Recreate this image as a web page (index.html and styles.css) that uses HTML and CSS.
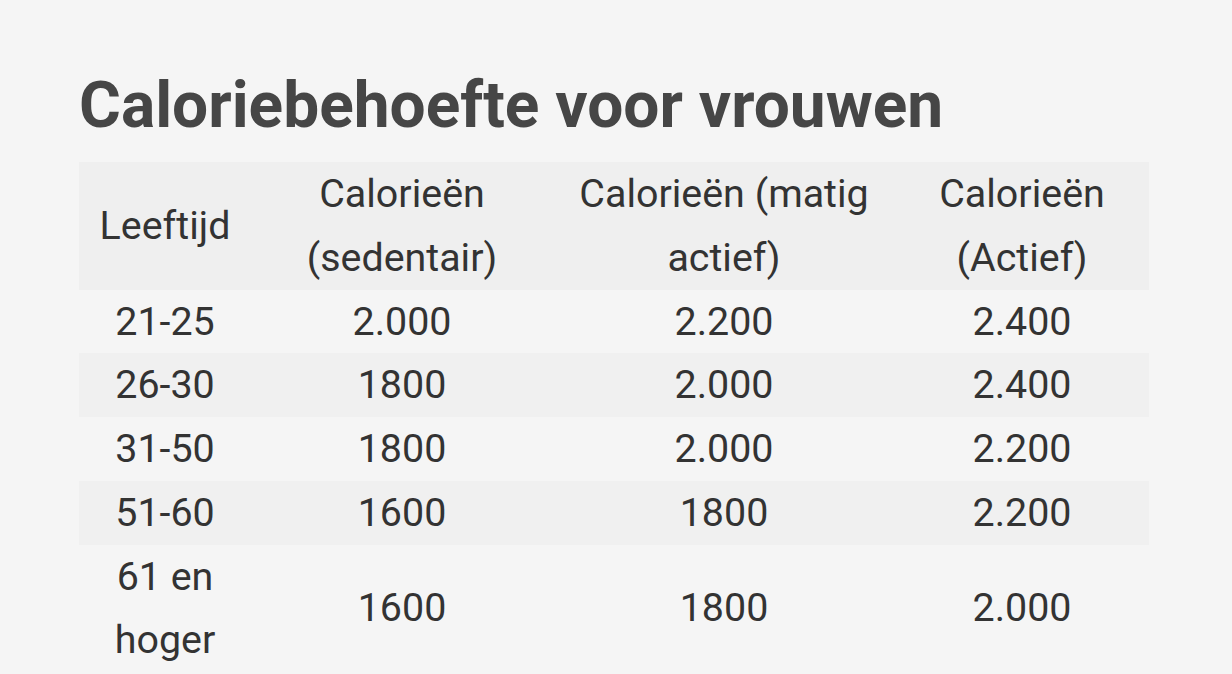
FILE: index.html
```html
<!DOCTYPE html>
<html lang="nl">
<head>
<meta charset="utf-8">
<title>Caloriebehoefte voor vrouwen</title>
<link rel="stylesheet" href="styles.css">
</head>
<body>
<main class="page">
  <h1 class="title">Caloriebehoefte voor vrouwen</h1>
  <table class="cal-table">
    <colgroup>
      <col class="c1"><col class="c2"><col class="c3"><col class="c4">
    </colgroup>
    <thead>
      <tr>
        <th>Leeftijd</th>
        <th>Calorieën (sedentair)</th>
        <th>Calorieën (matig actief)</th>
        <th>Calorieën (Actief)</th>
      </tr>
    </thead>
    <tbody>
      <tr><td>21-25</td><td>2.000</td><td>2.200</td><td>2.400</td></tr>
      <tr class="alt"><td>26-30</td><td>1800</td><td>2.000</td><td>2.400</td></tr>
      <tr><td>31-50</td><td>1800</td><td>2.000</td><td>2.200</td></tr>
      <tr class="alt"><td>51-60</td><td>1600</td><td>1800</td><td>2.200</td></tr>
      <tr><td class="narrow">61 en hoger</td><td>1600</td><td>1800</td><td>2.000</td></tr>
    </tbody>
  </table>
</main>
</body>
</html>
```

FILE: styles.css
```css
html, body {
  margin: 0;
  padding: 0;
  background: #f5f5f5;
}
body {
  font-family: Roboto, "Liberation Sans", sans-serif;
  color: #333333;
}
.page {
  padding: 62px 83px 0 79px;
}
.title {
  margin: 0 0 12px 0;
  font-size: 64px;
  line-height: 88px;
  font-weight: 700;
  color: #464646;
}
.cal-table {
  width: 1070px;
  border-collapse: collapse;
  table-layout: fixed;
  font-size: 39.4px;
  line-height: 63.75px;
}
.c1 { width: 172px; }
.c2 { width: 302px; }
.c3 { width: 342px; }
.c4 { width: 254px; }
.cal-table th,
.cal-table td {
  padding: 0;
  text-align: center;
  vertical-align: middle;
  font-weight: 400;
}
.cal-table thead tr {
  background: #efefef;
}
.cal-table th {
  padding: 0 20px;
}
.cal-table tr.alt {
  background: #f0f0f0;
}
.cal-table td.narrow {
  padding: 0 26px;
}
```
